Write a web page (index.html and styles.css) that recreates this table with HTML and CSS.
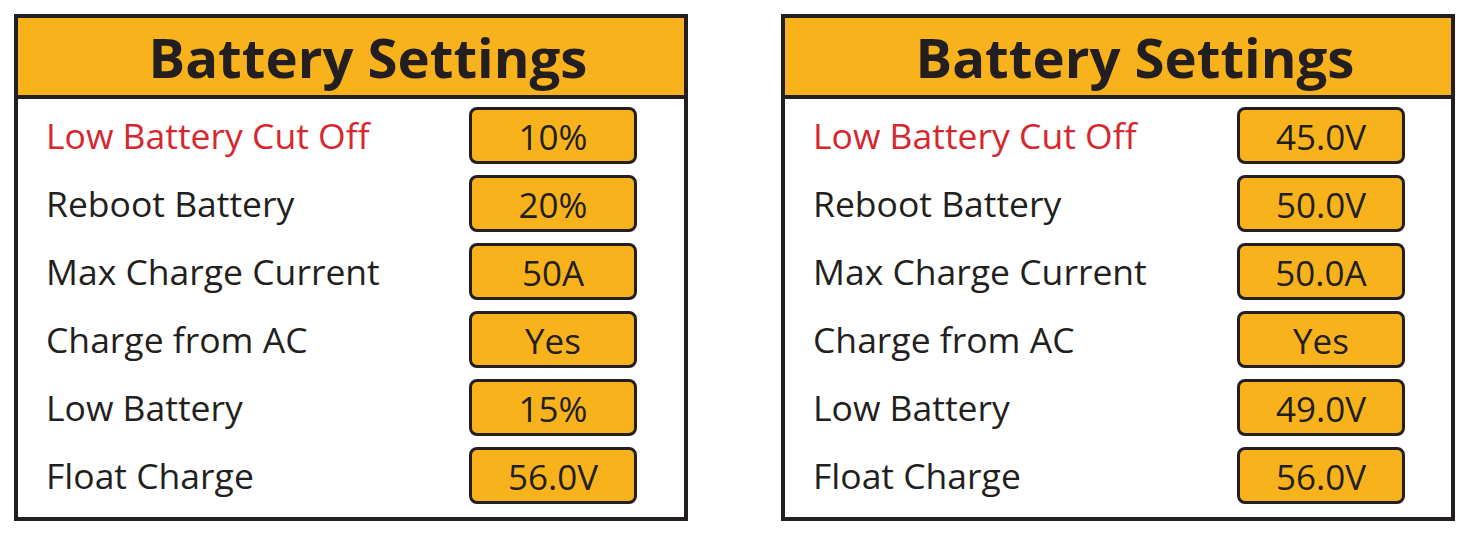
FILE: index.html
```html
<!DOCTYPE html>
<html lang="en">
<head>
<meta charset="utf-8">
<title>Battery Settings</title>
<link rel="stylesheet" href="styles.css">
</head>
<body>
<div class="page">
  <section class="panel">
    <header class="panel-head"><h1 class="title">Battery Settings</h1></header>
    <div class="panel-body">
      <div class="row"><span class="label label-alert">Low Battery Cut Off</span><span class="value">10%</span></div>
      <div class="row"><span class="label">Reboot Battery</span><span class="value">20%</span></div>
      <div class="row"><span class="label">Max Charge Current</span><span class="value">50A</span></div>
      <div class="row"><span class="label">Charge from AC</span><span class="value">Yes</span></div>
      <div class="row"><span class="label">Low Battery</span><span class="value">15%</span></div>
      <div class="row"><span class="label">Float Charge</span><span class="value">56.0V</span></div>
    </div>
  </section>
  <section class="panel panel-right">
    <header class="panel-head"><h1 class="title">Battery Settings</h1></header>
    <div class="panel-body">
      <div class="row"><span class="label label-alert">Low Battery Cut Off</span><span class="value">45.0V</span></div>
      <div class="row"><span class="label">Reboot Battery</span><span class="value">50.0V</span></div>
      <div class="row"><span class="label">Max Charge Current</span><span class="value">50.0A</span></div>
      <div class="row"><span class="label">Charge from AC</span><span class="value">Yes</span></div>
      <div class="row"><span class="label">Low Battery</span><span class="value">49.0V</span></div>
      <div class="row"><span class="label">Float Charge</span><span class="value">56.0V</span></div>
    </div>
  </section>
</div>
</body>
</html>
```
FILE: styles.css
```css
html, body {
  margin: 0;
  padding: 0;
  background: #ffffff;
}
body {
  font-family: "Open Sans", "Noto Sans", sans-serif;
  color: #231f20;
}
.page {
  display: flex;
  gap: 93px;
  padding: 14px 0 0 14px;
}
.panel {
  width: 674px;
  height: 507px;
  box-sizing: border-box;
  border: 4px solid #231f20;
  display: flex;
  flex-direction: column;
}
.panel-head {
  height: 77px;
  background: #f8b21b;
  border-bottom: 4px solid #231f20;
  display: flex;
  align-items: center;
  justify-content: center;
  padding-left: 34px;
}
.title {
  margin: 0;
  font-size: 54.5px;
  font-weight: 700;
  line-height: 1;
  letter-spacing: 0;
  position: relative;
  top: 1px;
}
.panel-body {
  flex: 1;
  display: flex;
  flex-direction: column;
  gap: 11px;
  padding: 8px 47px 0 28px;
}
.panel-right .panel-body {
  padding-left: 28px;
  padding-right: 46px;
}
.row {
  display: flex;
  align-items: center;
  justify-content: space-between;
  height: 57px;
}
.label {
  font-size: 35.5px;
  line-height: 1;
}
.label-alert {
  color: #d7262e;
}
.value {
  width: 168px;
  height: 57px;
  box-sizing: border-box;
  border: 3px solid #231f20;
  border-radius: 8px;
  background: #f8b21b;
  display: flex;
  align-items: center;
  justify-content: center;
  padding-top: 2px;
  font-size: 35px;
  line-height: 1;
}
```
